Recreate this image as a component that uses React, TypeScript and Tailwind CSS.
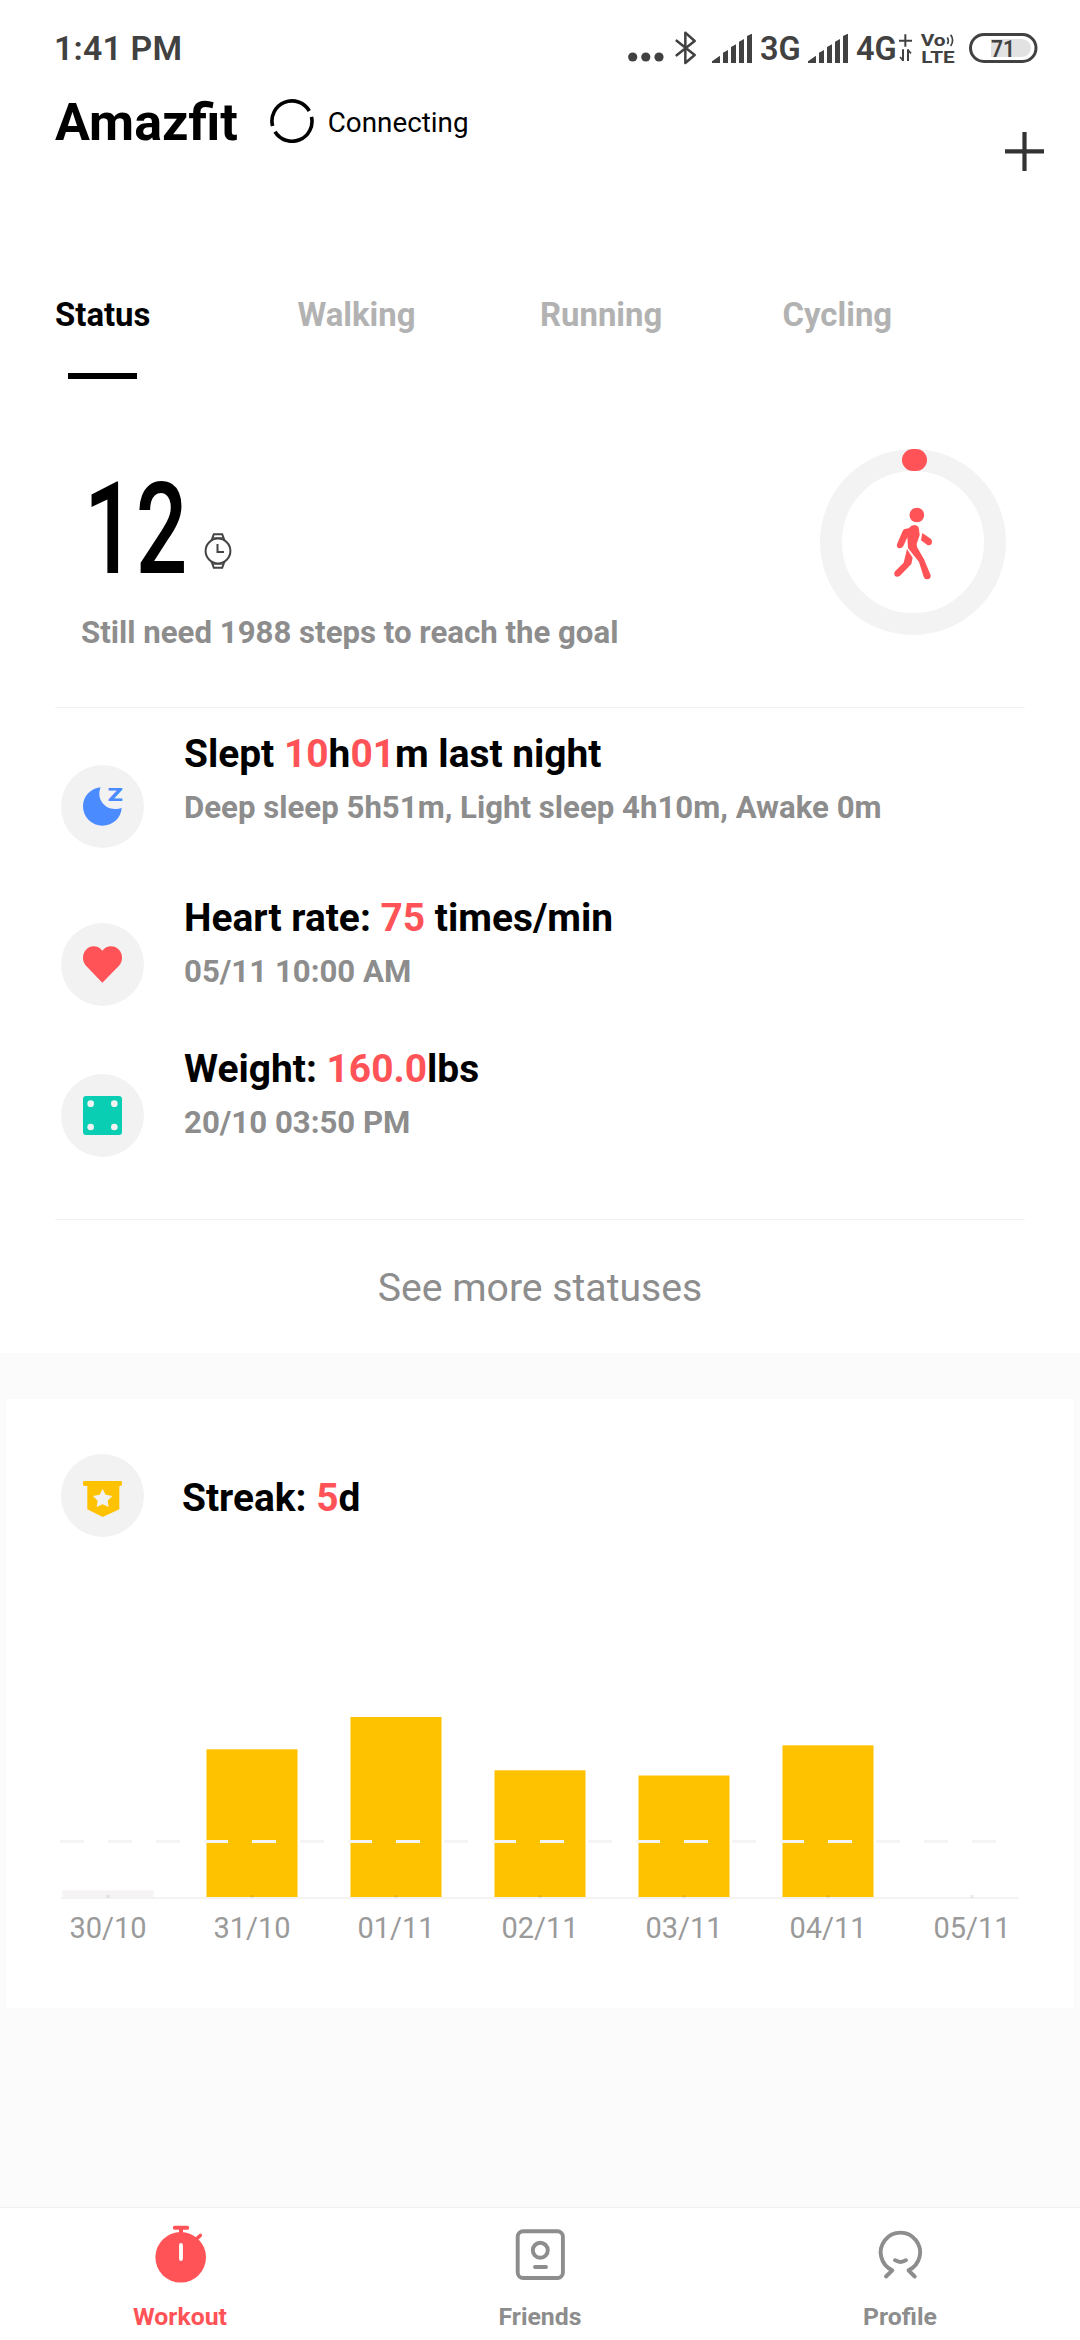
import React from "react";

interface StatusItem {
  icon: React.ReactNode;
  title: React.ReactNode;
  detail: string;
  rowClass: string;
  iconClass: string;
}

interface DayBar {
  label: string;
  top: number;
  color: string;
}

const tabs = ["Status", "Walking", "Running", "Cycling"];

// Top edge of each bar, in px inside the 200px high plot
const days: DayBar[] = [
  { label: "30/10", top: 190.5, color: "#f5f3f4" },
  { label: "31/10", top: 49.3, color: "#ffc200" },
  { label: "01/11", top: 17, color: "#ffc200" },
  { label: "02/11", top: 70.3, color: "#ffc200" },
  { label: "03/11", top: 75.5, color: "#ffc200" },
  { label: "04/11", top: 45.3, color: "#ffc200" },
  { label: "05/11", top: 197, color: "#ffc200" },
];

const Red = ({ children }: { children: React.ReactNode }) => (
  <span className="text-[#ff5357]">{children}</span>
);

const SignalIcon = ({ className }: { className: string }) => (
  <svg className={className} width="40" height="29" viewBox="336 99 120 87" fill="#414141">
    <path d="M336 186v-5l24-17v22zM369 186v-31l15-8v39zM393 186v-48l15-8v56zM417 186v-64l15-8v72zM441 186v-81l15-7v88z" />
  </svg>
);

const StatusBar = () => (
  <div className="flex h-24 items-center pl-[54px] pr-[42px] text-[#414141]">
    <span className="pt-[2px] text-[33.8px] leading-10 font-semibold tracking-[0.2px]">1:41 PM</span>
    <div className="ml-auto flex items-center">
      <svg className="mt-[18px]" width="36" height="10" viewBox="0 0 36 10" fill="#414141">
        <circle cx="4.7" cy="5" r="4.6" />
        <circle cx="17.8" cy="5" r="4.6" />
        <circle cx="31" cy="5" r="4.6" />
      </svg>
      <svg className="ml-[11px]" width="22" height="34" viewBox="225 93 66 102" fill="none" stroke="#414141" strokeWidth="7.5" strokeLinecap="round" strokeLinejoin="round">
        <path d="M230 122l54 43-28 24V98l28 25-54 43" />
      </svg>
      <SignalIcon className="ml-[15px]" />
      <span className="ml-[8px] w-[41px] pt-[1px] text-[32.5px] leading-10 font-semibold">3G</span>
      <SignalIcon className="ml-[7px]" />
      <span className="ml-[8px] w-[40px] pt-[1px] text-[32.5px] leading-10 font-semibold">4G</span>
      <svg className="ml-[3px]" width="13" height="28" viewBox="897 102 39 84" fill="none" stroke="#414141" strokeWidth="6">
        <path d="M897 122h39M916 103v37" />
        <path d="M909 148v35M924 183v-35" />
        <path d="M909 181l-9-10M924 150l9 10" strokeWidth="5" />
      </svg>
      <svg className="ml-[4px]" width="44" height="44" viewBox="948 78 132 132" fill="#414141">
        <text x="962" y="137" fontSize="50" fontWeight="700" textLength="75" lengthAdjust="spacingAndGlyphs">Vo</text>
        <path d="M1042 112q6 10 0 20M1052 104q12 17 0 34" fill="none" stroke="#414141" strokeWidth="5" />
        <text x="964" y="188" fontSize="51" fontWeight="700" textLength="100" lengthAdjust="spacingAndGlyphs">LTE</text>
      </svg>
      <svg className="ml-[9px]" width="69" height="30" viewBox="0 0 69 30">
        <rect x="1.5" y="1.5" width="65.5" height="27" rx="13.5" fill="#fff" stroke="#414141" strokeWidth="3" />
        <path d="M22 6h31a9 9 0 0 1 0 18h-31z" fill="#e2e2e2" />
        <text x="22" y="24" fontSize="24" fontWeight="600" fill="#414141" textLength="24" lengthAdjust="spacingAndGlyphs">71</text>
      </svg>
    </div>
  </div>
);

const Header = () => (
  <header className="flex h-[174px] items-start pl-[55px] pr-[36px]">
    <div className="flex h-[50px] items-center">
      <h1 className="pt-[4px] text-[52px] leading-[50px] font-bold text-black">Amazfit</h1>
      <svg className="ml-[32px]" width="44" height="44" viewBox="0 0 44 44" fill="none" stroke="#000" strokeWidth="3.6">
        <path d="M2.6 27A20 20 0 0 1 39.3 12" />
        <path d="M41.5 17.8A20 20 0 0 1 5 32.8" />
      </svg>
      <span className="ml-[14px] pt-[3px] text-[27.8px] leading-10 text-black">Connecting</span>
    </div>
    <svg className="mt-[36px] ml-auto" width="39" height="39" viewBox="0 0 39 39" stroke="#333" strokeWidth="4.2">
      <path d="M0 19.3h39M19.5 0v39" />
    </svg>
  </header>
);

const Tabs = () => (
  <nav className="px-[55px]">
    <div className="grid h-[88px] grid-cols-4 items-center pt-[2px]">
      {tabs.map((tab, index) => (
        <span
          key={tab}
          className={`text-[32.9px] leading-10 font-bold ${index === 0 ? "text-black" : "text-[#b2b2b2]"}`}
        >
          {tab}
        </span>
      ))}
    </div>
    <div className="mt-[15px] ml-[13px] h-[6px] w-[69px] bg-black" />
  </nav>
);

const StepsSummary = () => (
  <section className="flex h-[328px] justify-between pl-[81px] pr-[74px]">
    <div className="pt-[100px]">
      <div className="flex h-[100px] items-end">
        <div className="w-[123px] pl-[3px]">
          <span className="inline-block origin-left translate-y-px scale-x-[0.71] text-[128px] leading-[100px] font-medium text-black">12</span>
        </div>
        <svg className="mb-[10px]" width="28" height="36" viewBox="0 0 28 36" fill="none" stroke="#444" strokeWidth="2">
          <circle cx="14" cy="18" r="12.4" />
          <path d="M7.6 7.3L9.8 1.2h8.4l2.2 6.1M7.6 28.7l2.2 6.1h8.4l2.2-6.1" />
          <path d="M9 4.8h10M9 31.2h10" strokeWidth="1" />
          <path d="M13.5 11v8h6.5" />
        </svg>
      </div>
      <p className="mt-[34px] text-[31.2px] leading-10 font-bold text-[#8d8d8d]">
        Still need 1988 steps to reach the goal
      </p>
    </div>
    <svg className="mt-[70px]" width="186" height="186" viewBox="120 87 558 558">
      <circle cx="399" cy="366" r="246" fill="none" stroke="#f3f3f3" strokeWidth="66" />
      <rect x="366" y="87" width="75" height="66" rx="33" fill="#ff5357" />
      <g fill="#ff5357">
        <circle cx="410.500" cy="285" r="22" />
        <path d="M374 327l12-2q8-10 18-10 12 1 13 13l2 17-9 27 1 9 21 37 20 48q1 12-11 12-7 0-10-8l-14-44-33-42-2-32-12 26q-4 8-13 7-8-3-6-12l17-40q2-5 6-6z" />
        <path d="M427 339l26 18q6 7 2 14-5 7-13 4l-19-14z" />
        <path d="M381 387l17 26-4 19-34 35q-8 6-15 1-5-8 1-15l25-25z" />
      </g>
    </svg>
  </section>
);

const statuses: StatusItem[] = [
  {
    icon: (
      <svg width="83" height="83" viewBox="63 135 249 249">
        <path fill="#4a8bff" d="M182 202C151 205 129 230 129 259a58 58 0 0 0 58 58c32 0 57-25 58-54-40 17-80-20-63-61z" />
        <text x="203" y="242" fontSize="56" fontWeight="900" fill="#4a8bff" textLength="45" lengthAdjust="spacingAndGlyphs">Z</text>
      </svg>
    ),
    title: <>Slept <Red>10</Red>h<Red>01</Red>m last night</>,
    detail: "Deep sleep 5h51m, Light sleep 4h10m, Awake 0m",
    rowClass: "h-[164px]",
    iconClass: "mt-[35px]",
  },
  {
    icon: (
      <svg width="83" height="83" viewBox="63 609 249 249">
        <path fill="#ff5357" d="M187 788l-49-51c-12-13-12-35 0-48 13-14 36-14 49 3 13-17 36-17 50-3 12 13 12 35 0 48z" />
      </svg>
    ),
    title: <>Heart rate: <Red>75</Red> times/min</>,
    detail: "05/11 10:00 AM",
    rowClass: "h-[151px]",
    iconClass: "mt-[29px]",
  },
  {
    icon: (
      <svg width="83" height="83" viewBox="63 1062 249 249">
        <rect x="129" y="1128" width="117" height="117" rx="9" fill="#0aceb3" />
        <g fill="#f2f2f2">
          <circle cx="152" cy="1151" r="10" />
          <circle cx="223" cy="1151" r="10" />
          <circle cx="152" cy="1221" r="10" />
          <circle cx="223" cy="1221" r="10" />
        </g>
      </svg>
    ),
    title: <>Weight: <Red>160.0</Red>lbs</>,
    detail: "20/10 03:50 PM",
    rowClass: "h-[174px]",
    iconClass: "mt-[29px]",
  },
];

const StatusList = () => (
  <section className="mx-[55px] border-y border-[#f2f2f2] pt-[22px] pl-[6px]">
    {statuses.map((item) => (
      <div key={item.detail} className={`flex items-start ${item.rowClass}`}>
        <div className={`size-[83px] rounded-full bg-[#f2f2f2] ${item.iconClass}`}>{item.icon}</div>
        <div className="ml-[40px]">
          <h2 className="text-[38.9px] leading-[48px] font-bold text-black">{item.title}</h2>
          <p className="mt-[8px] text-[31.2px] leading-[44px] font-bold text-[#8d8d8d]">{item.detail}</p>
        </div>
      </div>
    ))}
  </section>
);

const StreakCard = () => (
  <section className="mx-[6px] mt-[46px] h-[609px] bg-white pt-[55px]">
    <div className="flex items-center pl-[55px]">
      <div className="size-[83px] rounded-full bg-[#f2f2f2]">
        <svg width="83" height="83" viewBox="0 0 249 249">
          <path fill="#ffc200" d="M70 81h109q4 0 4 4v6q0 5-5 5h-3v70l-50 23-46-23V96h-9q-4 0-4-5v-6q0-4 4-4z" />
          <path fill="#f2f2f2" d="M125 105l9 17 20 4-14 14 3 19-18-8-18 8 3-19-14-14 20-4z" />
        </svg>
      </div>
      <h2 className="ml-[38px] pt-[4px] text-[38.9px] leading-[48px] font-bold text-black">
        Streak: <Red>5</Red>d
      </h2>
    </div>
    <div className="mx-auto mt-[163px] w-[1008px]">
      <svg width="1008" height="200" viewBox="0 0 1008 200">
        {days.map((day, index) => (
          <rect key={day.label} x={index * 144 + 26.5} y={day.top} width="91" height={197 - day.top} fill={day.color} />
        ))}
        <path d="M25 198h958" stroke="#f3f3f3" strokeWidth="2" />
        <path d="M24 141.500h936" stroke="#f5f5f5" strokeWidth="3" strokeDasharray="24 24" />
        {days.map((day, index) => (
          <rect key={day.label} x={index * 144 + 70.5} y="195" width="3" height="3" fill="#000" fillOpacity="0.08" />
        ))}
      </svg>
      <div className="mt-[8px] grid grid-cols-7 text-center text-[29px] leading-10 text-[#9a9a9a]">
        {days.map((day) => (
          <span key={day.label}>{day.label}</span>
        ))}
      </div>
    </div>
  </section>
);

const BottomNav = () => (
  <nav className="mt-auto grid h-[133px] grid-cols-3 border-t border-[#f0f0f0] bg-white pt-[14px] text-[24.8px] leading-[30px] font-bold text-[#8d8d8d]">
    <div className="flex flex-col items-center">
      <svg width="60" height="64" viewBox="0 0 60 64" fill="none" stroke="#ff5357" strokeLinecap="round">
        <circle cx="30.700" cy="35.300" r="25.300" fill="#ff5357" stroke="none" />
        <path d="M24.800 5.700h12.400M31 6v6" strokeWidth="4" />
        <path d="M46 17.300l4.300-3.800" strokeWidth="3.600" />
        <path d="M31 23v14" stroke="#fff" strokeWidth="3.800" />
      </svg>
      <span className="mt-4 text-[#ff5357]">Workout</span>
    </div>
    <div className="flex flex-col items-center">
      <svg width="60" height="64" viewBox="0 0 60 64" fill="none" stroke="#8d8d8d" strokeWidth="3.9" strokeLinecap="round">
        <rect x="7.700" y="9.200" width="45.200" height="46.800" rx="5.500" />
        <circle cx="30.300" cy="28.300" r="7.500" />
        <path d="M25 45h11" />
      </svg>
      <span className="mt-4">Friends</span>
    </div>
    <div className="flex flex-col items-center">
      <svg width="60" height="64" viewBox="0 0 60 64" fill="none" stroke="#8d8d8d" strokeWidth="3.9" strokeLinecap="round" strokeLinejoin="round">
        <path d="M16 54.500l6.300-6.200A19.700 19.700 0 1 1 38.500 48.300l6.200 6.200" />
        <path d="M25 38.200q5.500 3.600 11 0" />
      </svg>
      <span className="mt-4">Profile</span>
    </div>
  </nav>
);

const App: React.FC = () => {
  return (
    <div className="flex h-[2340px] w-[1080px] flex-col overflow-hidden bg-[#fbfbfb] font-[Roboto,sans-serif]">
      <div className="h-[1353px] bg-white">
        <StatusBar />
        <Header />
        <Tabs />
        <StepsSummary />
        <StatusList />
        <div className="flex h-[133px] items-center justify-center pt-[2px] text-[39.2px] leading-[48px] text-[#8d8d8d]">
          See more statuses
        </div>
      </div>
      <StreakCard />
      <BottomNav />
    </div>
  );
};

export default App;
